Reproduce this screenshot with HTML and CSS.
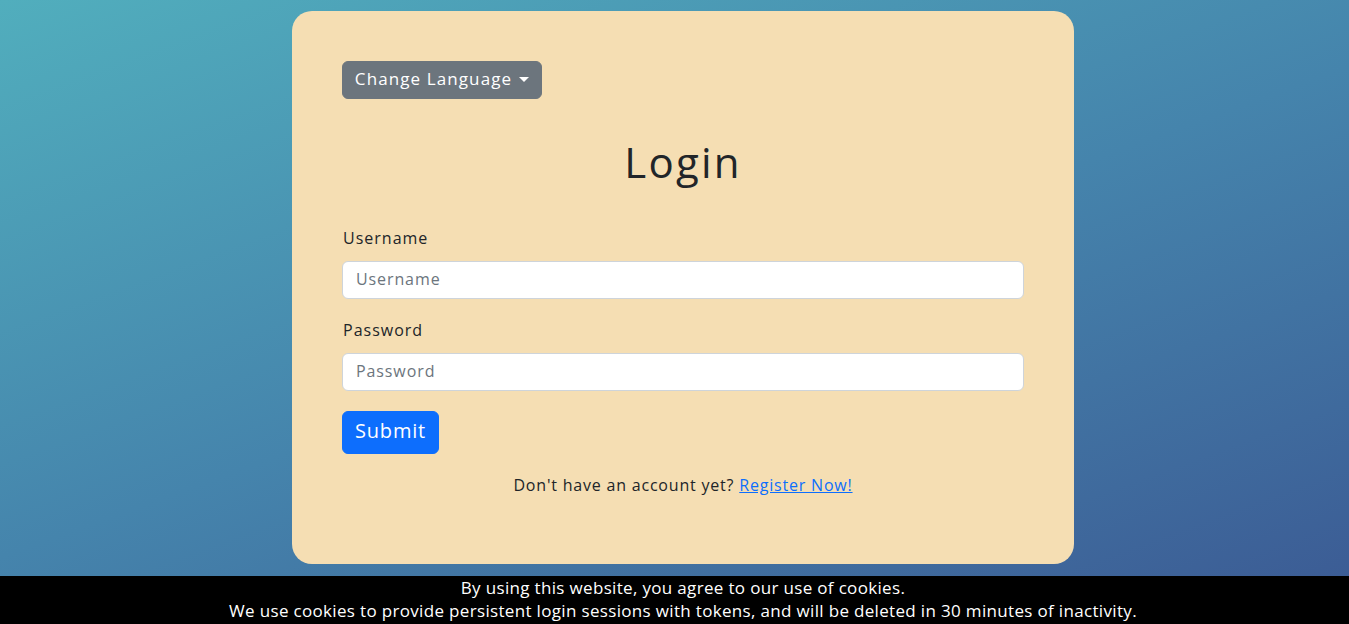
FILE: index.html
```html
<!DOCTYPE html>
<html lang="en">
<head>
<meta charset="utf-8">
<title>Login</title>
<link rel="stylesheet" href="styles.css">
</head>
<body>
<main class="page">
  <section class="card">
    <div class="lang-row">
      <button class="btn-lang" type="button">Change Language<span class="caret"></span></button>
    </div>
    <h1 class="title">Login</h1>
    <form class="form">
      <label class="label" for="u">Username</label>
      <input class="input" id="u" type="text" placeholder="Username">
      <label class="label" for="p">Password</label>
      <input class="input" id="p" type="password" placeholder="Password">
      <div class="submit-row"><button class="btn-submit" type="button">Submit</button></div>
    </form>
    <p class="register">Don't have an account yet? <a href="#" class="link">Register Now!</a></p>
  </section>
</main>
<div class="cookie">
  <div>By using this website, you agree to our use of cookies.</div>
  <div>We use cookies to provide persistent login sessions with tokens, and will be deleted in 30 minutes of inactivity.</div>
</div>
</body>
</html>
```

FILE: styles.css
```css
html, body {
  margin: 0;
  height: 100%;
}
body {
  font-family: "Open Sans", "Noto Sans", sans-serif;
  color: #212529;
  background: linear-gradient(160deg, #51aebd 0%, #4584ac 50%, #3b5993 100%);
  overflow: hidden;
}
.page {
  display: flex;
  justify-content: center;
  padding-top: 11px;
  padding-left: 17px;
}
.card {
  width: 782px;
  box-sizing: border-box;
  background: #f5deb3;
  border-radius: 20px;
  padding: 50px 50px 67px;
  display: flex;
  flex-direction: column;
}
.lang-row {
  display: flex;
}
.btn-lang {
  font-family: inherit;
  font-size: 17px;
  letter-spacing: 1.1px;
  white-space: nowrap;
  color: #fff;
  background: #6c757d;
  border: 1px solid #6c757d;
  border-radius: 6px;
  height: 38px;
  width: 200px;
  padding: 0 0 3px;
  display: flex;
  align-items: center;
  justify-content: center;
}
.caret {
  display: inline-block;
  margin-left: 7px;
  width: 0;
  height: 0;
  border-top: 5px solid #fff;
  border-left: 5px solid transparent;
  border-right: 5px solid transparent;
  margin-top: 1px;
}
.title {
  margin: 39px 0 40px;
  font-size: 42px;
  letter-spacing: 2.2px;
  font-weight: 400;
  line-height: 48px;
  text-align: center;
}
.form {
  display: flex;
  flex-direction: column;
}
.label {
  font-size: 16px;
  letter-spacing: 1px;
  line-height: 24px;
  margin-bottom: 11px;
  padding-left: 1px;
}
.input {
  font-family: inherit;
  font-size: 16px;
  letter-spacing: 0.9px;
  height: 38px;
  box-sizing: border-box;
  border: 1px solid #ced4da;
  border-radius: 6px;
  background: #fff;
  padding: 0 13px 2px;
  margin-bottom: 19px;
  color: #212529;
}
.input::placeholder {
  color: #6c757d;
}
.submit-row {
  display: flex;
  margin-top: 1px;
}
.btn-submit {
  font-family: inherit;
  font-size: 20px;
  letter-spacing: 0.8px;
  color: #fff;
  background: #0d6efd;
  border: 1px solid #0d6efd;
  border-radius: 6px;
  height: 43px;
  width: 97px;
  padding: 0 0 4px;
}
.register {
  margin: 19px 0 0;
  font-size: 16px;
  letter-spacing: 0.8px;
  line-height: 24px;
  text-align: center;
}
.link {
  color: #0d6efd;
}
.cookie {
  position: fixed;
  left: 0;
  right: 0;
  bottom: 0;
  height: 48px;
  padding-left: 17px;
  background: #000;
  color: #fff;
  font-size: 17px;
  letter-spacing: 0.33px;
  line-height: 23px;
  text-align: center;
}
```
